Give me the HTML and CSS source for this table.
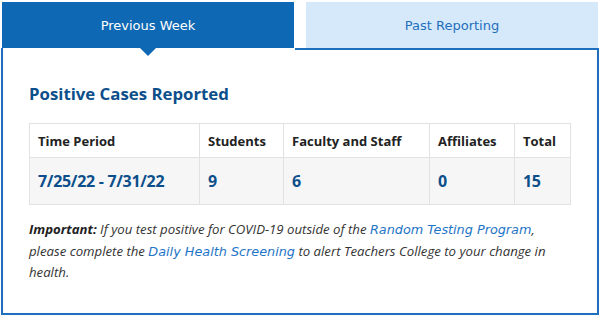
FILE: index.html
```html
<!DOCTYPE html>
<html>
<head>
<meta charset="utf-8">
<link rel="stylesheet" href="styles.css">
</head>
<body>
<div class="widget">
  <div class="tabs">
    <div class="tab active">Previous Week</div>
    <div class="tab">Past Reporting</div>
  </div>
  <div class="panel">
    <h2 class="title">Positive Cases Reported</h2>
    <table class="cases">
      <thead>
        <tr>
          <th class="c1">Time Period</th>
          <th class="c2">Students</th>
          <th class="c3">Faculty and Staff</th>
          <th class="c4">Affiliates</th>
          <th class="c5">Total</th>
        </tr>
      </thead>
      <tbody>
        <tr>
          <td>7/25/22 - 7/31/22</td>
          <td>9</td>
          <td>6</td>
          <td>0</td>
          <td>15</td>
        </tr>
      </tbody>
    </table>
    <p class="note"><strong>Important:</strong> If you test positive for COVID-19 outside of the <a href="#">Random Testing Program</a>, please complete the <a href="#">Daily Health Screening</a> to alert Teachers College to your change in health.</p>
  </div>
</div>
</body>
</html>
```
FILE: styles.css
```css
html, body {
  margin: 0;
  padding: 0;
  background: #fff;
}
.widget {
  width: 598px;
  padding: 2px 0 0 1px;
  font-family: "Open Sans", sans-serif;
}
.tabs {
  display: flex;
  gap: 12px;
  padding-left: 1px;
}
.tab {
  width: 292px;
  height: 46px;
  display: flex;
  align-items: center;
  justify-content: center;
  font-family: "DejaVu Sans", sans-serif;
  font-size: 13px;
  background: #d5e9fb;
  color: #1f6fbd;
  position: relative;
}
.tab.active {
  background: #0f68b3;
  color: #fff;
}
.tab.active::after {
  content: "";
  position: absolute;
  left: 50%;
  bottom: -8px;
  margin-left: -8px;
  border-left: 8px solid transparent;
  border-right: 8px solid transparent;
  border-top: 8px solid #0f68b3;
}
.panel {
  border: 2px solid #1f6fbf;
  border-top: none;
  height: 267px;
  box-sizing: border-box;
  padding: 36px 26px 0 26px;
  background: linear-gradient(#1f6fbf, #1f6fbf) no-repeat 292px 0 / 306px 2px;
}
.title {
  margin: 0 0 19px 0;
  font-family: "Open Sans", sans-serif;
  font-weight: bold;
  font-size: 16.8px;
  color: #0c4f8b;
  line-height: 20px;
}
.cases {
  width: 542px;
  border-collapse: collapse;
  margin-bottom: 14px;
}
.cases th, .cases td {
  border: 1px solid #e2e2e2;
  text-align: left;
  padding: 0 8px;
}
.cases th {
  height: 33px;
  font-size: 13px;
  font-weight: bold;
  color: #222;
  background: #fff;
}
.cases td {
  height: 46px;
  font-size: 16px;
  letter-spacing: -0.3px;
  font-weight: bold;
  color: #0c4f8b;
  background: #f6f6f6;
}
.c1 { width: 153px; }
.c2 { width: 67px; }
.c3 { width: 129px; }
.c4 { width: 68px; }
.note {
  margin: 0;
  max-width: 530px;
  font-size: 13.2px;
  font-style: italic;
  line-height: 20.5px;
  color: #333;
}
.note strong {
  color: #222;
}
.note a {
  color: #1e74c6;
  text-decoration: none;
  font-family: "DejaVu Sans", sans-serif;
  font-size: 12.8px;
}
```
